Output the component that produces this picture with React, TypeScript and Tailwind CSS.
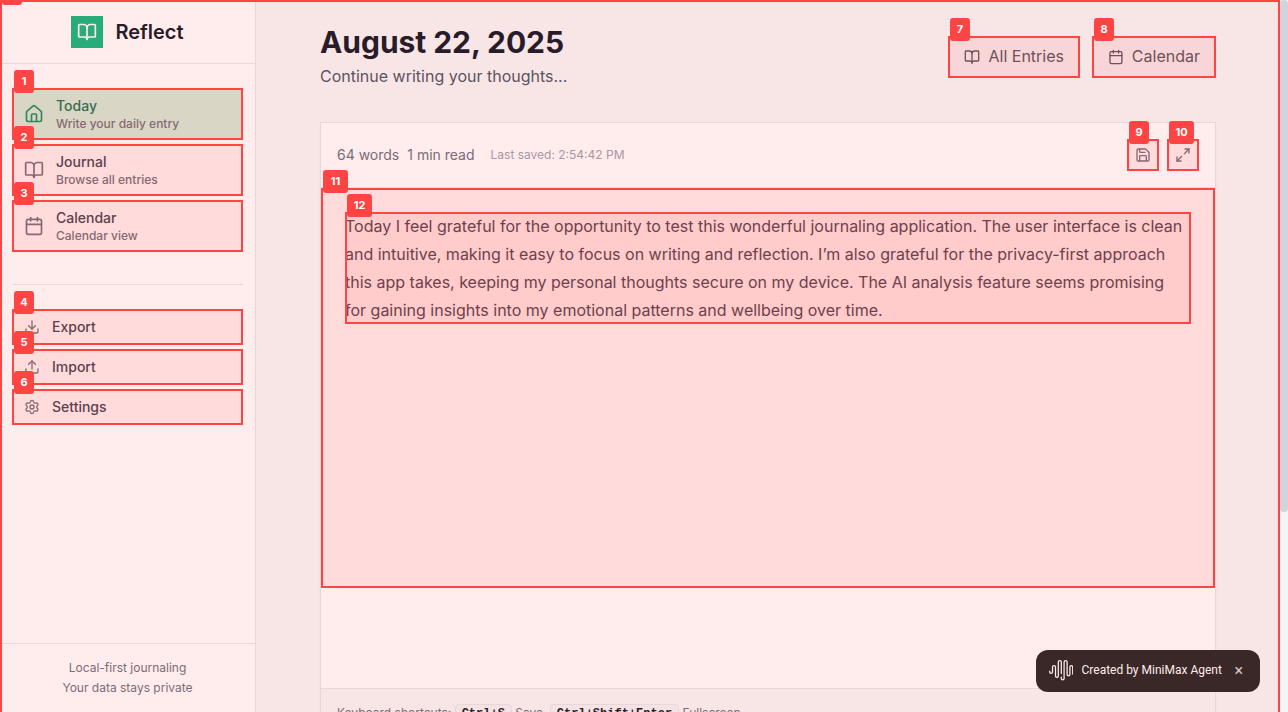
import React from "react";
import { BookOpen, Calendar, Download, House, Maximize2, Save, Settings, Upload } from "lucide-react";

function Marker({ id }: { id: number }) {
  return (
    <span className="pointer-events-none absolute inset-0 z-20 border-2 border-[#ff4444] bg-[#ff4444]/10">
      <span
        className={`absolute -top-5 left-0 z-30 flex h-[23px] items-center justify-center rounded-[3px] bg-[#ff4444] text-[11px] font-bold leading-none text-white ${
          id > 9 ? "w-[25px]" : "w-5"
        }`}
      >
        {id}
      </span>
    </span>
  );
}

type IconType = React.ComponentType<{ className?: string; strokeWidth?: number }>;

const navItems: { id: number; icon: IconType; title: string; note: string; active?: boolean }[] = [
  { id: 1, icon: House, title: "Today", note: "Write your daily entry", active: true },
  { id: 2, icon: BookOpen, title: "Journal", note: "Browse all entries" },
  { id: 3, icon: Calendar, title: "Calendar", note: "Calendar view" },
];

const tools: { id: number; icon: IconType; title: string }[] = [
  { id: 4, icon: Download, title: "Export" },
  { id: 5, icon: Upload, title: "Import" },
  { id: 6, icon: Settings, title: "Settings" },
];

function Sidebar() {
  return (
    <aside className="flex w-64 shrink-0 flex-col border-r border-[#e5e7eb] bg-white">
      <div className="flex h-16 items-center justify-center gap-3 border-b border-[#e5e7eb]">
        <div className="flex size-8 items-center justify-center bg-[#10b981] text-white">
          <BookOpen className="size-5" />
        </div>
        <span className="text-xl font-semibold text-[#111827]">Reflect</span>
      </div>
      <nav className="flex flex-1 flex-col px-3 pt-6">
        <div className="flex flex-col gap-1">
          {navItems.map(({ id, icon: Icon, title, note, active }) => (
            <a
              key={id}
              className={`relative flex items-center gap-3 px-3 py-2 font-medium ${
                active ? "bg-[#d1fae5] text-[#047857]" : "text-[#374151]"
              }`}
            >
              <Icon className={`size-5 ${active ? "text-[#059669]" : "text-[#6b7280]"}`} />
              <span className="flex flex-col">
                <span className="text-sm leading-5">{title}</span>
                <span className="text-xs leading-4 text-[#6b7280]">{note}</span>
              </span>
              <Marker id={id} />
            </a>
          ))}
        </div>
        <div className="mt-8 flex flex-col gap-1 border-t border-[#e5e7eb] pt-6">
          {tools.map(({ id, icon: Icon, title }) => (
            <button
              key={id}
              className="relative flex items-center gap-3 px-3 py-2 text-sm font-medium leading-5 text-[#374151]"
            >
              <Icon className="size-4 text-[#6b7280]" />
              {title}
              <Marker id={id} />
            </button>
          ))}
        </div>
      </nav>
      <div className="flex h-[69px] flex-col items-center gap-1 border-t border-[#e5e7eb] pt-4 text-xs leading-4 text-[#6b7280]">
        <p>Local-first journaling</p>
        <p>Your data stays private</p>
      </div>
    </aside>
  );
}

function Kbd({ children }: { children: React.ReactNode }) {
  return (
    <kbd className="rounded border border-[#e5e7eb] bg-[#f3f4f6] px-1.5 py-0.5 font-['Liberation_Mono',monospace] text-xs font-semibold text-[#111827]">
      {children}
    </kbd>
  );
}

function Editor() {
  return (
    <section className="mt-[34px] flex shrink-0 flex-col border border-[#e5e7eb] bg-white shadow-[0_1px_2px_rgba(0,0,0,0.05)]">
      <div className="flex items-center justify-between border-b border-[#e5e7eb] p-4">
        <div className="flex items-center text-sm text-[#6b7280]">
          <span>64 words</span>
          <span className="ml-2">1 min read</span>
          <span className="ml-4 text-xs text-[#9ca3af]">Last saved: 2:54:42 PM</span>
        </div>
        <div className="flex gap-2 text-[#6b7280]">
          <button className="relative flex size-8 items-center justify-center">
            <Save className="size-4" />
            <Marker id={9} />
          </button>
          <button className="relative flex size-8 items-center justify-center">
            <Maximize2 className="size-4" />
            <Marker id={10} />
          </button>
        </div>
      </div>
      <div className="h-[500px]">
        <div className="relative h-[400px] p-6">
          <Marker id={11} />
          <div className="relative pr-2 text-base leading-7 text-[#374151]">
            <p>
              Today I feel grateful for the opportunity to test this wonderful journaling application. The user interface is clean
              and intuitive, making it easy to focus on writing and reflection. I’m also grateful for the privacy-first approach
              this app takes, keeping my personal thoughts secure on my device. The AI analysis feature seems promising
              for gaining insights into my emotional patterns and wellbeing over time.
            </p>
            <Marker id={12} />
          </div>
        </div>
      </div>
      <div className="h-[52px] border-t border-[#e5e7eb] bg-[#f8f9fa] px-4 pt-4 text-xs leading-4 text-[#6b7280]">
        Keyboard shortcuts: <Kbd>Ctrl+S</Kbd> Save, <Kbd>Ctrl+Shift+Enter</Kbd> Fullscreen
      </div>
    </section>
  );
}

function AgentBadge() {
  return (
    <div className="absolute left-[1036px] top-[650px] flex h-[42px] w-56 items-center rounded-xl bg-[#242424] pl-[13px] font-[Roboto,sans-serif] text-xs text-white">
      <svg className="h-6 w-6 shrink-0" viewBox="0 0 24 24" fill="none" stroke="currentColor" strokeWidth="1.25" strokeLinecap="round">
        <path d="M.7 12v1a1.4 1.4 0 0 0 2.8 0V8a1.5 1.5 0 0 1 3 0v9a1.4 1.4 0 0 0 2.8 0V3a1.5 1.5 0 0 1 3 0v11.5M12.3 18v1.5a1.4 1.4 0 0 0 2.8 0V3a1.5 1.5 0 0 1 3 0v12.5a1.4 1.4 0 0 0 2.8 0V8a1.4 1.4 0 0 1 2.8 0v7" />
      </svg>
      <span className="ml-[8.5px] whitespace-nowrap pb-0.5">Created by MiniMax Agent</span>
      <span className="ml-[12.5px] text-base leading-none text-white/80">×</span>
    </div>
  );
}

export default function App() {
  return (
    <div className="relative flex h-[712px] w-[1288px] overflow-hidden bg-[#f8f9fa] font-[Inter,sans-serif]">
      <Sidebar />
      <main className="flex h-full flex-1 flex-col bg-[#f8f9fa] px-16 pt-6">
        <header className="flex shrink-0 items-start justify-between">
          <div>
            <h1 className="text-3xl font-bold leading-9 tracking-[-0.05px] text-[#111827]">August 22, 2025</h1>
            <p className="mt-1 text-base leading-6 text-[#4b5563]">Continue writing your thoughts...</p>
          </div>
          <div className="mt-3 flex gap-3 text-base leading-6 text-[#4b5563]">
            <button className="relative flex h-[42px] w-[132px] items-center gap-2 px-4">
              <BookOpen className="size-4" />
              <span className="pb-0.5 pl-[0.5px]">All Entries</span>
              <Marker id={7} />
            </button>
            <button className="relative flex h-[42px] w-[124px] items-center gap-2 px-4">
              <Calendar className="size-4" />
              <span className="pb-0.5">Calendar</span>
              <Marker id={8} />
            </button>
          </div>
        </header>
        <Editor />
      </main>
      <div className="w-2 shrink-0 bg-[#f3f4f6]">
        <div className="h-[512px] rounded bg-[#d1d5db]" />
      </div>
      <AgentBadge />
      <div className="pointer-events-none absolute inset-y-0 left-0 z-10 w-[1280px] border-x-2 border-t-2 border-[#ff4444] bg-[#ff4444]/10">
        <span className="absolute -top-5 left-0 h-[23px] w-5 rounded-[3px] bg-[#ff4444]" />
      </div>
    </div>
  );
}
